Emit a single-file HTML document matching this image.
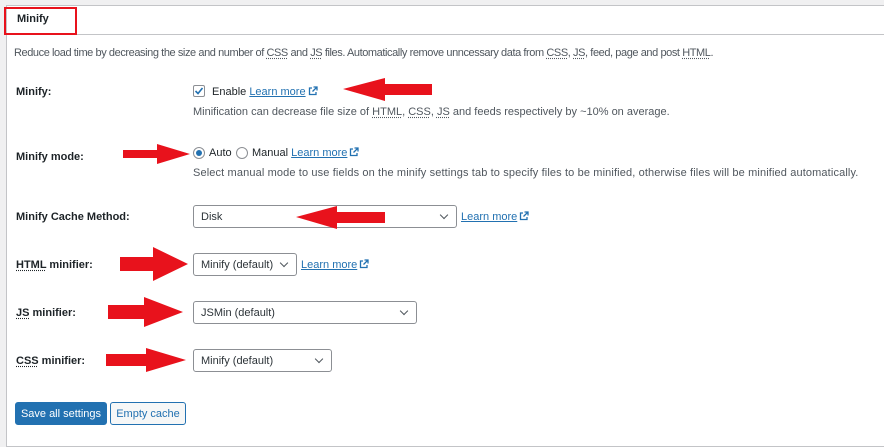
<!DOCTYPE html>
<html><head><meta charset="utf-8"><style>
body{margin:0;width:884px;height:435px;background:#f0f0f1;position:relative;overflow:hidden;font-family:"Liberation Sans",sans-serif;font-size:11px;color:#1d2327}
.panel{position:absolute;left:6px;top:5px;width:878px;height:440px;background:#fff;border:1px solid #c3c4c7;border-right:none}
.hdr{position:absolute;left:6px;top:34px;width:878px;border-top:1px solid #c3c4c7}
.a{position:absolute;white-space:nowrap}
.lbl{font-weight:bold;color:#1d2327}
.d{color:#50575e}
abbr{text-decoration:underline dotted;text-underline-offset:2px}
a{color:#2271b1;text-decoration:underline}
.sel{position:absolute;border:1px solid #8c8f94;border-radius:3px;background:#fff;height:23px;box-sizing:border-box;padding-left:7px;line-height:22px;color:#2c3338}
.sel:after{content:"";position:absolute;right:9px;top:6px;width:5px;height:5px;border-right:1.5px solid #50575e;border-bottom:1.5px solid #50575e;transform:rotate(45deg)}
.ext{display:inline-block;vertical-align:-1px;margin-left:2px}
.btn{position:absolute;height:23px;box-sizing:border-box;border-radius:3px;line-height:22px;text-align:center;font-size:11px}
</style></head><body>
<div class="panel"></div>
<div class="hdr"></div>
<div style="position:absolute;left:4px;top:7px;width:69px;height:24px;border:2px solid #e8121c"></div>
<div class="a lbl" style="left:17px;top:13px">Minify</div>
<div class="a d" style="left:14px;top:47px;letter-spacing:-0.42px">Reduce load time by decreasing the size and number of <abbr>CSS</abbr> and <abbr>JS</abbr> files. Automatically remove unncessary data from <abbr>CSS</abbr>, <abbr>JS</abbr>, feed, page and post <abbr>HTML</abbr>.</div>

<div class="a lbl" style="left:16px;top:86px">Minify:</div>
<div class="a" style="left:193px;top:85px;width:12px;height:12px;border:1px solid #8c8f94;border-radius:2px;box-sizing:border-box"><svg width="12" height="12" style="position:absolute;left:-1px;top:-1px"><path d="M2.5 6 L5 8.5 L9.5 3" stroke="#2271b1" stroke-width="1.6" fill="none"/></svg></div>
<div class="a" style="left:212px;top:86px">Enable <a>Learn more</a><svg class="ext" width="10" height="10"><path d="M4 2H1.5V8.5H8V6M5.5 1H9V4.5M9 1L4.5 5.5" stroke="#2271b1" stroke-width="1.3" fill="none"/></svg></div>
<div class="a d" style="left:193px;top:106px">Minification can decrease file size of <abbr>HTML</abbr>, <abbr>CSS</abbr>, <abbr>JS</abbr> and feeds respectively by ~10% on average.</div>

<div class="a lbl" style="left:16px;top:151px">Minify mode:</div>
<div class="a" style="left:193px;top:147px;width:12px;height:12px;border:1px solid #8c8f94;border-radius:50%;box-sizing:border-box"><div style="position:absolute;left:2px;top:2px;width:6px;height:6px;border-radius:50%;background:#2271b1"></div></div>
<div class="a" style="left:209px;top:147px">Auto</div>
<div class="a" style="left:236px;top:147px;width:12px;height:12px;border:1px solid #8c8f94;border-radius:50%;box-sizing:border-box"></div>
<div class="a" style="left:252px;top:147px">Manual <a>Learn more</a><svg class="ext" width="10" height="10"><path d="M4 2H1.5V8.5H8V6M5.5 1H9V4.5M9 1L4.5 5.5" stroke="#2271b1" stroke-width="1.3" fill="none"/></svg></div>
<div class="a d" style="left:193px;top:167px;letter-spacing:0.13px">Select manual mode to use fields on the minify settings tab to specify files to be minified, otherwise files will be minified automatically.</div>

<div class="a lbl" style="left:16px;top:211px">Minify Cache Method:</div>
<div class="sel" style="left:193px;top:205px;width:264px">Disk</div>
<div class="a" style="left:461px;top:211px"><a>Learn more</a><svg class="ext" width="10" height="10"><path d="M4 2H1.5V8.5H8V6M5.5 1H9V4.5M9 1L4.5 5.5" stroke="#2271b1" stroke-width="1.3" fill="none"/></svg></div>

<div class="a lbl" style="left:16px;top:259px"><abbr>HTML</abbr> minifier:</div>
<div class="sel" style="left:193px;top:253px;width:104px">Minify (default)</div>
<div class="a" style="left:301px;top:259px"><a>Learn more</a><svg class="ext" width="10" height="10"><path d="M4 2H1.5V8.5H8V6M5.5 1H9V4.5M9 1L4.5 5.5" stroke="#2271b1" stroke-width="1.3" fill="none"/></svg></div>

<div class="a lbl" style="left:16px;top:307px"><abbr>JS</abbr> minifier:</div>
<div class="sel" style="left:193px;top:301px;width:224px">JSMin (default)</div>

<div class="a lbl" style="left:16px;top:355px"><abbr>CSS</abbr> minifier:</div>
<div class="sel" style="left:193px;top:349px;width:139px">Minify (default)</div>

<div class="btn" style="left:15px;top:402px;width:92px;background:#2271b1;border:1px solid #2271b1;color:#fff">Save all settings</div>
<div class="btn" style="left:110px;top:402px;width:76px;background:#f6f7f7;border:1px solid #2271b1;color:#2271b1">Empty cache</div>

<svg class="a" style="left:0;top:0" width="884" height="435">
<g fill="#e8121c">
<polygon points="343,89 385,78 385,84 432,84 432,95 385,95 385,101"/>
<polygon points="123,150 157,150 157,144 190,154 157,164 157,158 123,158"/>
<polygon points="296,217 337,206 337,212 385,212 385,223 337,223 337,229"/>
<polygon points="120,257 153,257 153,247 188,264 153,281 153,271 120,271"/>
<polygon points="108,305 144,305 144,297 183,312 144,327 144,319 108,319"/>
<polygon points="106,354 146,354 146,348 186,360 146,372 146,366 106,366"/>
</g></svg>
</body></html>
